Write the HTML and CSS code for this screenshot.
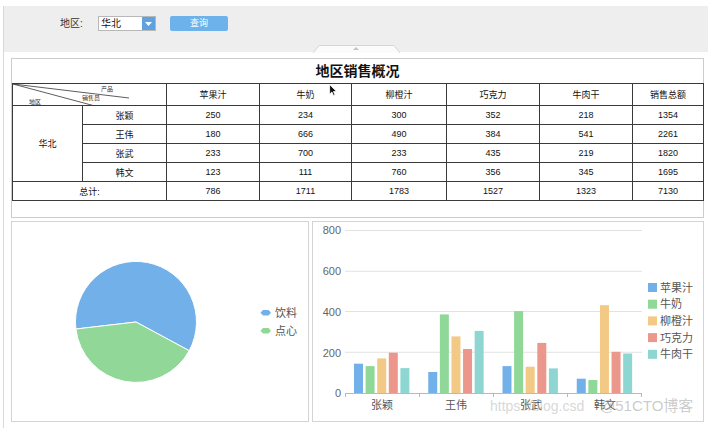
FILE: index.html
```html
<!DOCTYPE html>
<html lang="zh-CN">
<head>
<meta charset="utf-8">
<title>地区销售概况</title>
<link rel="stylesheet" href="styles.css">
</head>
<body>
<div class="page">
  <div class="topbar">
    <span class="lbl">地区:</span>
    <div class="select">
      <span class="sel-text">华北</span>
      <span class="sel-btn"><svg width="7" height="4" viewBox="0 0 7 4"><path d="M0 0 L7 0 L3.5 4 Z" fill="#fff"/></svg></span>
    </div>
    <button class="query" type="button">查询</button>
  </div>

  <div class="content">
    <svg class="collapse-tab" width="87" height="8" viewBox="0 0 87 8">
      <path d="M0 8 L6 0.5 L81 0.5 L87 8" fill="#fbfbfb" stroke="#d6d6d6" stroke-width="1"/>
      <path d="M40 5 L46 5 L43 2 Z" fill="#c4c4c4"/>
    </svg>

    <section class="report">
      <h1 class="title">地区销售概况</h1>
      <table class="sales">
        <colgroup>
          <col class="c-region"><col class="c-seller"><col class="c-p1"><col class="c-p2"><col class="c-p3"><col class="c-p4"><col class="c-p5"><col class="c-total">
        </colgroup>
        <thead>
          <tr>
            <th colspan="2" class="diag">
              <svg class="diag-lines" width="154" height="22" viewBox="0 0 154 22">
                <line x1="0" y1="0" x2="116" y2="14" stroke="#333" stroke-width="0.8"/>
                <line x1="0" y1="0" x2="82" y2="22" stroke="#333" stroke-width="0.8"/>
              </svg>
              <span class="d-prod">产品</span>
              <span class="d-seller">销售员</span>
              <span class="d-region">地区</span>
            </th>
            <th>苹果汁</th><th>牛奶</th><th>柳橙汁</th><th>巧克力</th><th>牛肉干</th><th>销售总额</th>
          </tr>
        </thead>
        <tbody>
          <tr><td rowspan="4">华北</td><td>张颖</td><td>250</td><td>234</td><td>300</td><td>352</td><td>218</td><td>1354</td></tr>
          <tr><td>王伟</td><td>180</td><td>666</td><td>490</td><td>384</td><td>541</td><td>2261</td></tr>
          <tr><td>张武</td><td>233</td><td>700</td><td>233</td><td>435</td><td>219</td><td>1820</td></tr>
          <tr><td>韩文</td><td>123</td><td>111</td><td>760</td><td>356</td><td>345</td><td>1695</td></tr>
          <tr class="sum"><td colspan="2">总计:</td><td>786</td><td>1711</td><td>1783</td><td>1527</td><td>1323</td><td>7130</td></tr>
        </tbody>
      </table>
      <svg class="cursor" width="9" height="13" viewBox="0 0 9 13">
        <path d="M0.6 0.6 L0.6 10.2 L2.9 8 L4.5 11.6 L6 10.9 L4.5 7.5 L7.6 7.5 Z" fill="#111" stroke="#fff" stroke-width="0.8"/>
      </svg>
    </section>

    <div class="charts">
      <div class="panel pie-panel">
        <svg class="chart" width="296" height="199" viewBox="0 0 296 199">
          <path d="M124 100 L177.2 128.7 A60.5 60.5 0 1 0 63.9 107 Z" fill="#72b0e9" stroke="#fff" stroke-width="1"/>
          <path d="M124 100 L63.9 107 A60.5 60.5 0 0 0 177.2 128.7 Z" fill="#91d898" stroke="#fff" stroke-width="1"/>
          <path d="M248.5 90.7 L251 88 L256.5 88 L259 90.7 L256.5 93.4 L251 93.4 Z" fill="#72b0e9"/>
          <text x="263" y="94.5" class="lg">饮料</text>
          <path d="M248.5 108.7 L251 106 L256.5 106 L259 108.7 L256.5 111.4 L251 111.4 Z" fill="#91d898"/>
          <text x="263" y="112.5" class="lg">点心</text>
        </svg>
      </div>
      <div class="panel bar-panel">
        <svg class="chart" width="390" height="199" viewBox="0 0 390 199">
          <g stroke="#e2e2e2" stroke-width="1">
            <line x1="32" y1="8.5" x2="329" y2="8.5"/>
            <line x1="32" y1="49.25" x2="329" y2="49.25"/>
            <line x1="32" y1="89.5" x2="329" y2="89.5"/>
            <line x1="32" y1="130.25" x2="329" y2="130.25"/>
          </g>
          <g class="ax">
            <text x="28" y="12" text-anchor="end">800</text>
            <text x="28" y="53" text-anchor="end">600</text>
            <text x="28" y="93.5" text-anchor="end">400</text>
            <text x="28" y="134.5" text-anchor="end">200</text>
            <text x="28" y="175" text-anchor="end">0</text>
          </g>
          <g>
            <rect x="41" y="141.7" width="9" height="29.3" fill="#72b0e9"/>
            <rect x="52.6" y="144.1" width="9" height="26.9" fill="#8fd898"/>
            <rect x="64.2" y="136.4" width="9" height="34.6" fill="#f3c986"/>
            <rect x="75.8" y="130.7" width="9" height="40.3" fill="#ec978c"/>
            <rect x="87.4" y="146.1" width="9" height="24.9" fill="#8ed6d2"/>

            <rect x="115.25" y="150" width="9" height="21" fill="#72b0e9"/>
            <rect x="126.85" y="92.4" width="9" height="78.6" fill="#8fd898"/>
            <rect x="138.45" y="114.4" width="9" height="56.6" fill="#f3c986"/>
            <rect x="150.05" y="127" width="9" height="44" fill="#ec978c"/>
            <rect x="161.65" y="108.9" width="9" height="62.1" fill="#8ed6d2"/>

            <rect x="189.5" y="144.1" width="9" height="26.9" fill="#72b0e9"/>
            <rect x="201.1" y="89.1" width="9" height="81.9" fill="#8fd898"/>
            <rect x="212.7" y="144.7" width="9" height="26.3" fill="#f3c986"/>
            <rect x="224.3" y="120.9" width="9" height="50.1" fill="#ec978c"/>
            <rect x="235.9" y="146.4" width="9" height="24.6" fill="#8ed6d2"/>

            <rect x="263.75" y="156.7" width="9" height="14.3" fill="#72b0e9"/>
            <rect x="275.35" y="158" width="9" height="13" fill="#8fd898"/>
            <rect x="286.95" y="83.2" width="9" height="87.8" fill="#f3c986"/>
            <rect x="298.55" y="129.8" width="9" height="41.2" fill="#ec978c"/>
            <rect x="310.15" y="131.5" width="9" height="39.5" fill="#8ed6d2"/>
          </g>
          <g stroke="#b9b9b9" stroke-width="1">
            <line x1="32" y1="171.5" x2="329" y2="171.5"/>
            <line x1="32.5" y1="171" x2="32.5" y2="175"/>
            <line x1="106.5" y1="171" x2="106.5" y2="175"/>
            <line x1="180.5" y1="171" x2="180.5" y2="175"/>
            <line x1="254.5" y1="171" x2="254.5" y2="175"/>
            <line x1="328.5" y1="171" x2="328.5" y2="175"/>
          </g>
          <g class="cat">
            <text x="69" y="187" text-anchor="middle">张颖</text>
            <text x="143" y="187" text-anchor="middle">王伟</text>
            <text x="218" y="187" text-anchor="middle">张武</text>
            <text x="292" y="187" text-anchor="middle">韩文</text>
          </g>
          <g class="legend">
            <rect x="335" y="61" width="9" height="9" fill="#72b0e9"/>
            <text x="347" y="69.5">苹果汁</text>
            <rect x="335" y="77.7" width="9" height="9" fill="#8fd898"/>
            <text x="347" y="86.2">牛奶</text>
            <rect x="335" y="94.4" width="9" height="9" fill="#f3c986"/>
            <text x="347" y="102.9">柳橙汁</text>
            <rect x="335" y="111.1" width="9" height="9" fill="#ec978c"/>
            <text x="347" y="119.6">巧克力</text>
            <rect x="335" y="127.8" width="9" height="9" fill="#8ed6d2"/>
            <text x="347" y="136.3">牛肉干</text>
          </g>
          <text x="177" y="189" class="wm">https://blog.csd</text>
          <text x="287" y="189" class="wm wm2">@51CTO博客</text>
        </svg>
      </div>
    </div>
  </div>
</div>
</body>
</html>
```

FILE: styles.css
```css
* {
  box-sizing: border-box;
}

html,
body {
  margin: 0;
  padding: 0;
  background: #ffffff;
}

body {
  width: 708px;
  height: 428px;
  overflow: hidden;
  font-family: "Liberation Sans", "Noto Sans CJK SC", sans-serif;
  color: #222;
}

.page {
  margin: 6px 0 0 3px;
  height: 422px;
  border-left: 1px solid #d9d9d9;
}

/* ---------- top filter bar ---------- */
.topbar {
  height: 46px;
  background: #eeeeee;
  display: flex;
  align-items: flex-start;
  padding: 10px 0 0 56px;
}

.lbl {
  width: 38px;
  font-size: 10px;
  line-height: 15px;
  color: #333;
}

.select {
  width: 58px;
  height: 15px;
  display: flex;
  border: 1px solid #b8b8b8;
  background: #fff;
}

.sel-text {
  flex: 1;
  padding-left: 2px;
  font-size: 10px;
  line-height: 13px;
  color: #111;
}

.sel-btn {
  width: 13px;
  display: flex;
  align-items: center;
  justify-content: center;
  background: #5ea3df;
}

.query {
  margin-left: 14px;
  width: 58px;
  height: 15px;
  padding: 0;
  border: 0;
  border-radius: 2px;
  background: #6db2ea;
  color: #fff;
  font-family: inherit;
  font-size: 9px;
  line-height: 15px;
}

/* ---------- content ---------- */
.content {
  position: relative;
  padding: 6px 4px 0 7px;
}

.collapse-tab {
  position: absolute;
  left: 309px;
  top: -7px;
  display: block;
}

.report {
  position: relative;
  width: 693px;
  height: 160px;
  border: 1px solid #cccccc;
  background: #fff;
}

.title {
  margin: 0;
  height: 24px;
  line-height: 25px;
  text-align: center;
  font-size: 14px;
  font-weight: bold;
  color: #111;
}

.sales {
  width: 691px;
  border-collapse: collapse;
  table-layout: fixed;
  font-size: 9px;
  color: #111;
}

.c-region { width: 70px; }
.c-seller { width: 84px; }
.c-p1 { width: 93px; }
.c-p2 { width: 92px; }
.c-p3 { width: 95px; }
.c-p4 { width: 93px; }
.c-p5 { width: 93px; }
.c-total { width: 71px; }

.sales th,
.sales td {
  padding: 0;
  border: 1px solid #3a3a3a;
  text-align: center;
  font-weight: normal;
}

.sales thead tr {
  height: 22px;
}

.sales tbody tr {
  height: 19px;
}

.sales .sum td {
  border-top-color: #555;
}

.diag {
  position: relative;
}

.diag-lines {
  position: absolute;
  left: 0;
  top: 0;
  display: block;
}

.diag span {
  position: absolute;
  font-size: 6px;
  line-height: 6px;
  color: #333;
  white-space: nowrap;
}

.d-prod {
  left: 88px;
  top: 2px;
}

.d-seller {
  left: 69px;
  top: 11px;
}

.d-region {
  left: 16px;
  top: 15px;
}

.cursor {
  position: absolute;
  left: 317px;
  top: 25px;
  display: block;
}

/* ---------- charts ---------- */
.charts {
  display: flex;
  gap: 3px;
  margin-top: 3px;
}

.panel {
  height: 201px;
  border: 1px solid #d4d4d4;
  background: #fff;
}

.pie-panel {
  width: 298px;
}

.bar-panel {
  width: 392px;
}

.chart {
  display: block;
}

.chart text {
  font-family: "Liberation Sans", "Noto Sans CJK SC", sans-serif;
}

.lg {
  font-size: 11px;
  fill: #555;
}

.ax text {
  font-size: 11px;
  fill: #666;
}

.cat text {
  font-size: 11px;
  fill: #555;
}

.legend text {
  font-size: 11px;
  fill: #555;
}

.wm {
  font-size: 14px;
  fill: #b5b5b5;
  fill-opacity: 0.55;
}

.wm2 {
  font-size: 15px;
  fill: #a0a0a0;
}
```
